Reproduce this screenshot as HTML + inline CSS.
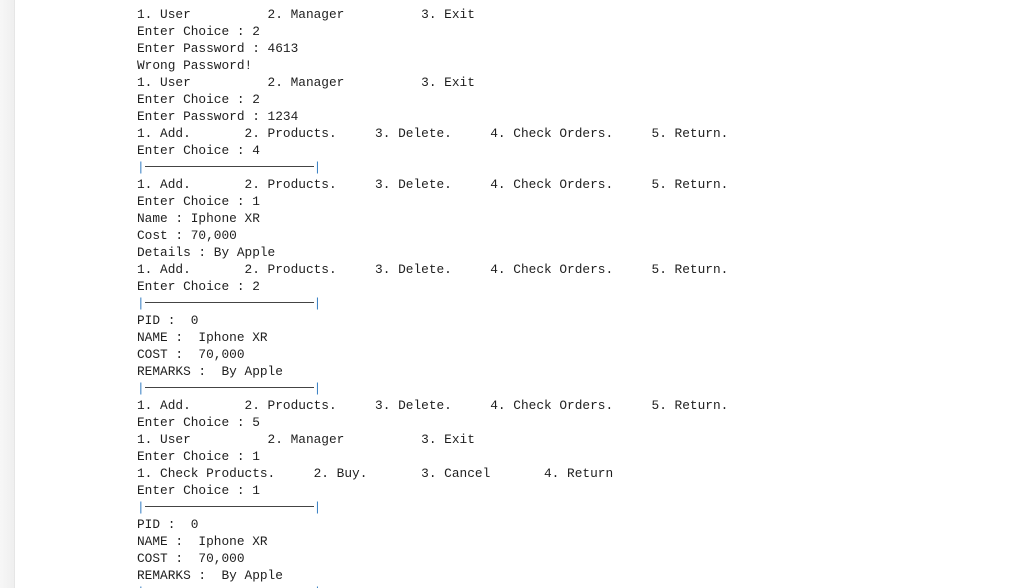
<!DOCTYPE html><html><head><style>
html,body{margin:0;width:1019px;height:588px;overflow:hidden;background:#fff;position:relative}
.side{position:absolute;left:0;top:0;width:14px;height:588px;background:linear-gradient(to right,#f7f7f7,#efefef);border-right:1px solid #e6e6e6}
pre{position:absolute;left:137px;top:6px;margin:0;font-family:"Liberation Mono",monospace;font-size:12.8px;line-height:17px;color:#1e1e1e}
.s{color:#3b82c4}
.d{display:inline-block;width:22ch;height:0;border-top:1px solid #444;vertical-align:middle;position:relative;top:-1px}
</style></head><body><div class="side"></div><pre>1. User          2. Manager          3. Exit
Enter Choice : 2
Enter Password : 4613
Wrong Password!
1. User          2. Manager          3. Exit
Enter Choice : 2
Enter Password : 1234
1. Add.       2. Products.     3. Delete.     4. Check Orders.     5. Return.
Enter Choice : 4
<span class="s">|</span><span class="d"></span><span class="s">|</span>
1. Add.       2. Products.     3. Delete.     4. Check Orders.     5. Return.
Enter Choice : 1
Name : Iphone XR
Cost : 70,000
Details : By Apple
1. Add.       2. Products.     3. Delete.     4. Check Orders.     5. Return.
Enter Choice : 2
<span class="s">|</span><span class="d"></span><span class="s">|</span>
PID :  0
NAME :  Iphone XR
COST :  70,000
REMARKS :  By Apple
<span class="s">|</span><span class="d"></span><span class="s">|</span>
1. Add.       2. Products.     3. Delete.     4. Check Orders.     5. Return.
Enter Choice : 5
1. User          2. Manager          3. Exit
Enter Choice : 1
1. Check Products.     2. Buy.       3. Cancel       4. Return
Enter Choice : 1
<span class="s">|</span><span class="d"></span><span class="s">|</span>
PID :  0
NAME :  Iphone XR
COST :  70,000
REMARKS :  By Apple
<span class="s">|</span><span class="d"></span><span class="s">|</span></pre></body></html>
